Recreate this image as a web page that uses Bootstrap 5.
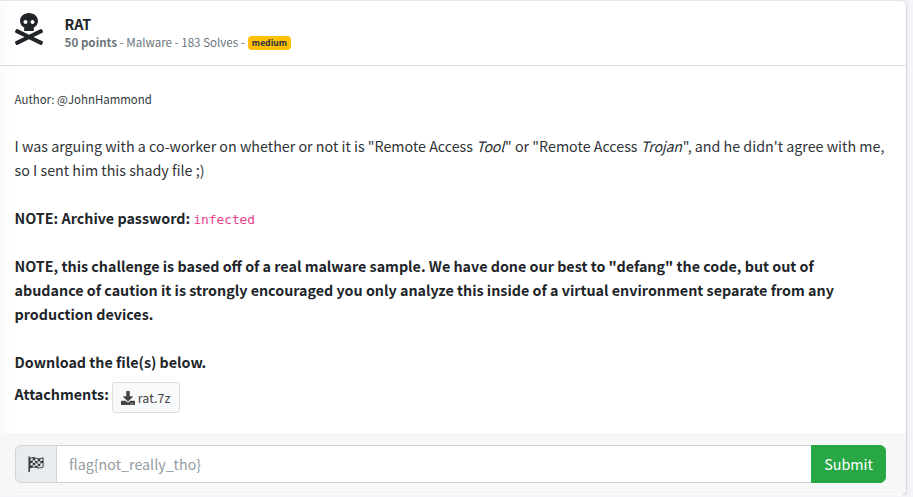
<!DOCTYPE html>
<html lang="en">
<head>
<meta charset="utf-8">
<meta name="viewport" content="width=device-width, initial-scale=1">
<title>RAT</title>
<link href="https://cdn.jsdelivr.net/npm/bootstrap@5.3.0/dist/css/bootstrap.min.css" rel="stylesheet">
<style>
body{font-family:"Noto Sans CJK SC","Noto Sans",sans-serif;font-size:14.31px;line-height:24px;color:#212529;background:#f4f5fa;overflow:hidden}
.challenge{width:906px;height:494px;margin-top:1px;border:0;border-radius:0 5px 5px 0;box-shadow:0 0 1px rgba(0,0,0,.25),0 1px 3px rgba(0,0,0,.25);background:linear-gradient(90deg,#fbfbfb,#fff 13px)}
.challenge-head{height:65px;padding:12px 14.6px;border-bottom:1px solid #dcdddf}
.skull{width:28px;height:32px}
.title{font-size:14.31px;line-height:20px;margin-left:22px;padding-top:1px}
.meta{font-size:11.6px;line-height:16px;color:#6c757d}
.level{font-size:8.6px;line-height:9px;padding:2px 4px 3px;margin-left:3px;margin-top:2px;background:#ffc107;color:#1f2d3d;border-radius:4px}
.challenge-text{padding:21px 14.6px 0;height:367px}
.author{font-size:11.45px;color:#343a40}
.intro{font-size:14.28px;margin-top:23px;color:#2f3337}
.intro em{margin-right:1px;letter-spacing:-.25px}
.secret{font-family:"DejaVu Sans Mono",monospace;font-size:12.8px;line-height:1;color:#e83e8c}
.note{height:24px}
.file{font-size:12.5px;line-height:21px;padding:4px 8px;background:#f8f9fa;border:1px solid #ddd;color:#444;border-radius:3px;height:31px;width:68px}
.file-row{margin-top:8px}
.file-row b{margin-right:3px}
.file svg{margin-right:3px}
.file span{margin-top:-1px}
.challenge-foot{height:61px;padding:12px 20px 11px 15px;background:#f7f7f7;border:0}
.flag-icon{width:42px;background:#e9ecef;border-color:#ced4da;color:#343a40}
.form-control{font-family:inherit;font-size:14.27px;height:38px;padding:5px 12px 7px;border-color:#ced4da}
.form-control::placeholder{color:#939ba2}
.submit{width:75px;height:38px;padding:0;font-size:14.33px;background:#28a745;border-color:#28a745;color:#fff}
</style>
</head>
<body>
<main class="card challenge">
  <header class="d-flex align-items-start challenge-head">
    <svg class="skull flex-shrink-0" viewBox="0 0 448 512" fill="currentColor"><path d="M439.15 453.06L297.17 384l141.99-69.06c7.9-3.95 11.11-13.56 7.15-21.46L432 264.85c-3.95-7.9-13.56-11.11-21.47-7.16L224 348.41 37.47 257.69c-7.9-3.95-17.51-.75-21.47 7.16L1.69 293.48c-3.95 7.9-.75 17.51 7.15 21.46L150.83 384 8.85 453.06c-7.9 3.95-11.11 13.56-7.15 21.47l14.31 28.63c3.95 7.9 13.56 11.11 21.47 7.15L224 419.59l186.53 90.72c7.9 3.95 17.51.75 21.47-7.15l14.31-28.63c3.95-7.91.74-17.52-7.16-21.47zM150 237.28l-5.48 25.87c-2.67 12.62 5.42 24.85 16.45 24.85h126.08c11.03 0 19.12-12.23 16.45-24.85l-5.5-25.87c41.78-22.41 70-62.75 70-109.28C368 57.31 303.53 0 224 0S80 57.31 80 128c0 46.53 28.21 86.87 70 109.28zM280 112c17.65 0 32 14.35 32 32s-14.35 32-32 32-32-14.35-32-32 14.35-32 32-32zm-112 0c17.65 0 32 14.35 32 32s-14.35 32-32 32-32-14.35-32-32 14.35-32 32-32z"/></svg>
    <div class="title">
      <div class="fw-bold">RAT</div>
      <div class="d-flex align-items-center meta"><span><b>50 points</b> - Malware - 183 Solves -</span><span class="fw-bold level">medium</span></div>
    </div>
  </header>
  <section class="challenge-text">
    <div class="author">Author: @JohnHammond</div>
    <p class="intro mb-4 text-nowrap">I was arguing with a co-worker on whether or not it is "Remote Access <em>Tool</em>" or "Remote Access <em>Trojan</em>", and he didn't agree with me,<br>so I sent him this shady file ;)</p>
    <p class="mb-4 fw-bold note">NOTE: Archive password: <span class="fw-normal secret">infected</span></p>
    <p class="mb-4 fw-bold text-nowrap">NOTE, this challenge is based off of a real malware sample. We have done our best to "defang" the code, but out of<br>abudance of caution it is strongly encouraged you only analyze this inside of a virtual environment separate from any<br>production devices.</p>
    <div class="fw-bold">Download the file(s) below.</div>
    <div class="d-flex file-row"><b>Attachments:</b><a class="btn d-inline-flex align-items-center file"><svg class="flex-shrink-0" width="14" height="14" viewBox="0 0 512 512" fill="currentColor"><path d="M216 0h80c13.3 0 24 10.7 24 24v168h87.7c17.8 0 26.7 21.5 14.1 34.1L269.7 378.3c-7.5 7.5-19.8 7.5-27.3 0L90.1 226.1c-12.6-12.6-3.7-34.1 14.1-34.1H192V24c0-13.3 10.7-24 24-24zm296 376v112c0 13.3-10.7 24-24 24H24c-13.3 0-24-10.7-24-24V376c0-13.3 10.7-24 24-24h146.7l49 49c20.1 20.1 52.5 20.1 72.6 0l49-49H488c13.3 0 24 10.7 24 24zm-124 88c0-11-9-20-20-20s-20 9-20 20 9 20 20 20 20-9 20-20zm64 0c0-11-9-20-20-20s-20 9-20 20 9 20 20 20 20-9 20-20z"/></svg><span>rat.7z</span></a></div>
  </section>
  <footer class="card-footer challenge-foot">
    <div class="input-group">
      <span class="input-group-text justify-content-center p-0 flag-icon"><svg width="16" height="16" viewBox="0 0 16 16"><path d="M1.2 1v14.5" stroke="currentColor" stroke-width="1.5" stroke-linecap="round"/><path d="M2 2.4c2.8-1.5 4.4-.8 6.2-.1 2.200.8 4 .6 6.900-.6v9.300c-2.900 1.300-4.900 1.200-7 .5-2-.7-3.600-.8-6.100.5z" fill="none" stroke="currentColor"/><path d="M4.700 1.900l2.500.2v2.400l-2.500-.3zM9.700 3l2.600-.1v2.400l-2.600.1zM2 5l2.700-.8v2.400L2 7.400zM7.200 4.500l2.500.9v2.400l-2.500-.9zM12.300 5.300l2.700-.9v2.400l-2.700.9zM4.700 6.600l2.500.3v2.400L4.700 9zM9.700 7.800l2.600-.1v2.400l-2.600.1zM2 9.800L4.700 9v2.200L2 12zM7.200 9.300l2.500.9v1.900l-2.500-.8z" fill="currentColor"/></svg></span>
      <input class="form-control" type="text" placeholder="flag{not_really_tho}">
      <button class="btn submit" type="button">Submit</button>
    </div>
  </footer>
</main>
<script src="https://cdn.jsdelivr.net/npm/bootstrap@5.3.0/dist/js/bootstrap.bundle.min.js"></script>
</body>
</html>
